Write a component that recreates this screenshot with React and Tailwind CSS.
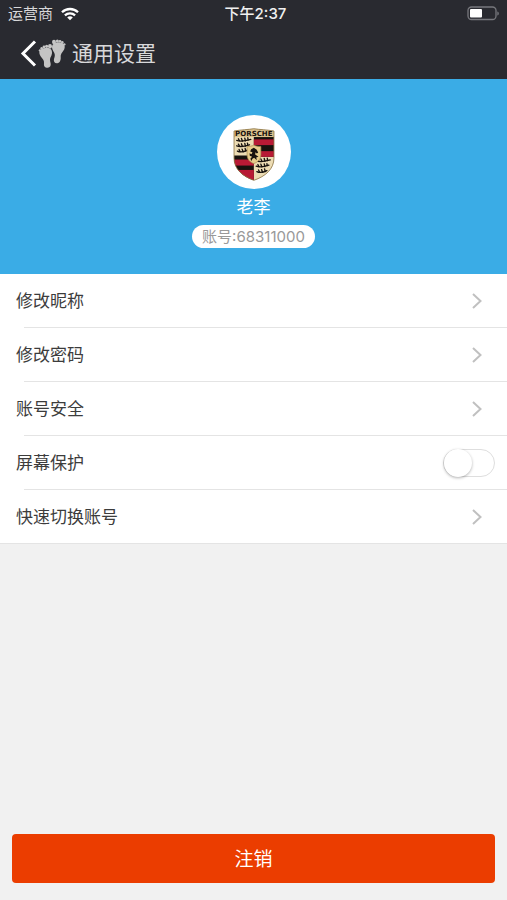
import { useState } from "react";

const MENU_ITEMS = [
  { id: "nickname", label: "修改昵称" },
  { id: "password", label: "修改密码" },
  { id: "security", label: "账号安全" },
  { id: "screen", label: "屏幕保护", toggle: true },
  { id: "switch", label: "快速切换账号" },
];

function WifiIcon() {
  return (
    <svg className="w-[18px] h-[14px]" viewBox="0 0 18 14" fill="none" stroke="white" strokeWidth="2.3">
      <path d="M1 5.2C5.4 0.9 12.6 0.9 17 5.2" />
      <path d="M3.9 8.3C6.8 5.6 11.2 5.6 14.1 8.3" />
      <path d="M9 13.2L6.2 10.4C7.8 9 10.2 9 11.8 10.4Z" fill="white" stroke="none" />
    </svg>
  );
}

function BatteryIcon() {
  return (
    <svg className="w-8 h-4" viewBox="0 0 32 16" fill="none">
      <rect x="1" y="1" width="28" height="12.5" rx="3.5" stroke="#77787d" strokeWidth="1.3" />
      <rect x="3" y="3" width="12" height="8.5" rx="1" fill="white" />
      <path d="M30.3 5.500v4c1-.3 1.5-1 1.5-2s-.5-1.7-1.500-2z" fill="#77787d" />
    </svg>
  );
}

function FootprintsIcon() {
  return (
    <svg className="w-[28px] h-[30px]" viewBox="0 0 84 90" fill="#c4c4c4">
      <path d="M4 40C4 31 14 27 26 27C38 26 43 33 42 43C41 52 36 55 36 62C36 68 39 72 38 78C37 84 32 87 26 86C19 86 17 80 18 73C19 65 15 61 10 55C6 50 4 46 4 40Z" />
      <circle cx="6" cy="34" r="3.5" />
      <circle cx="11" cy="28" r="3.8" />
      <circle cx="18" cy="24" r="4.2" />
      <circle cx="26" cy="22" r="4.8" />
      <ellipse cx="36" cy="22" rx="6" ry="7" />
      <path d="M44 17C49 9 61 8 71 11C82 15 82 26 77 34C72 42 67 46 68 54C69 62 66 72 58 73C50 74 46 67 48 60C50 54 52 49 49 42C45 34 39 26 44 17Z" />
      <ellipse cx="48" cy="9" rx="6" ry="7" />
      <circle cx="58" cy="6" r="4.6" />
      <circle cx="66" cy="7" r="4.2" />
      <circle cx="73" cy="10" r="3.8" />
      <circle cx="79" cy="16" r="3.5" />
    </svg>
  );
}

function Antlers() {
  return (
    <g fill="none" stroke="#17120e" strokeWidth="4" strokeLinecap="round">
      <path d="M0 9C12 14 28 10 42 6" />
      <path d="M8 10L5 4M17 11L14 3M26 10L24 2M34 8L33 1" />
      <path d="M0 25C12 30 26 26 38 22" />
      <path d="M8 26L5 20M17 27L14 19M26 26L24 18M33 23L32 17" />
      <path d="M2 41C12 46 22 43 32 38" />
      <path d="M10 42L7 36M19 43L16 35M27 41L25 33" />
    </g>
  );
}

function CrestLogo() {
  return (
    <svg className="w-[42px] h-[53px]" viewBox="0 0 123 158">
      <defs>
        <clipPath id="shield">
          <path d="M2 9C24 5 45 5 61 2C78 5 99 5 121 9V90C121 122 96 144 61 156C27 144 2 122 2 90Z" />
        </clipPath>
      </defs>
      <g clipPath="url(#shield)">
        <rect width="123" height="158" fill="#ecdcb4" />
        <rect x="61" y="25" width="62" height="61" fill="#17120e" />
        <rect x="61" y="34" width="62" height="17" fill="#b81a35" />
        <rect x="61" y="69" width="62" height="17" fill="#b81a35" />
        <rect x="0" y="82" width="61" height="78" fill="#17120e" />
        <rect x="0" y="94" width="61" height="18" fill="#b81a35" />
        <rect x="0" y="125" width="61" height="33" fill="#b81a35" />
        <g transform="translate(10 28)">
          <Antlers />
        </g>
        <g transform="translate(68 89)">
          <Antlers />
        </g>
        <rect width="123" height="27" fill="#dcc38d" />
      </g>
      <path d="M41 55C49 55 55 54 61 51C67 54 73 55 82 55V79C82 93 74 101 61 106C48 101 41 93 41 79Z" fill="#e6cc8c" stroke="#a88a4c" strokeWidth="2" />
      <path d="M53 63L61 59L69 64L74 73L70 76L66 72L65 79L75 86L68 88L70 96L62 89L57 92L53 99L51 91L56 86L49 83L48 75L54 78L57 72L50 70Z" fill="#17120e" />
      <path d="M2 9C24 5 45 5 61 2C78 5 99 5 121 9V90C121 122 96 144 61 156C27 144 2 122 2 90Z" fill="none" stroke="#8d7544" strokeWidth="2.5" />
      <text x="61" y="25" textAnchor="middle" fontSize="21" fontWeight="bold" fontFamily="DejaVu Sans, sans-serif" fill="#17120e">
        PORSCHE
      </text>
    </svg>
  );
}

function ArrowIcon() {
  return (
    <svg className="w-3 h-4 mr-3" viewBox="0 0 12 16" fill="none" stroke="#c0c0c0" strokeWidth="2">
      <path d="M2 1L9.500 8L2 15" />
    </svg>
  );
}

function Header() {
  return (
    <header className="bg-[#292a30] text-[#d8d8da]">
      <div className="grid grid-cols-3 items-center h-7 px-2 text-[15px]">
        <div className="flex items-center gap-2">
          <span>运营商</span>
          <WifiIcon />
        </div>
        <span className="pl-1 text-center font-medium text-[#f0f0f0]">下午2:37</span>
        <div className="flex justify-end">
          <BatteryIcon />
        </div>
      </div>
      <div className="flex items-center h-[51px] pl-5">
        <button type="button" aria-label="返回" className="cursor-pointer">
          <svg className="w-[18px] h-7" viewBox="0 0 18 28" fill="none" stroke="white" strokeWidth="3">
            <path d="M15 1.500L3 13.500L15 25.500" />
          </svg>
        </button>
        <FootprintsIcon />
        <h1 className="ml-1.5 text-[21px] leading-7">通用设置</h1>
      </div>
    </header>
  );
}

function Profile() {
  return (
    <section className="flex flex-col items-center bg-[#3aace6] pt-9 pb-[26px]">
      <div className="flex items-center justify-center size-[74px] pt-1 rounded-full bg-white">
        <CrestLogo />
      </div>
      <p className="mt-1 text-[17px] leading-7 text-white">老李</p>
      <p className="mt-1 px-2.5 rounded-full bg-white text-[15px] leading-[23px] text-[#999]">
        账号:68311000
      </p>
    </section>
  );
}

function App() {
  const [screenGuard, setScreenGuard] = useState(false);

  return (
    <div className="flex flex-col min-h-screen bg-[#f1f1f1] font-['Inter','Noto_Sans_CJK_SC',sans-serif]">
      <Header />
      <Profile />
      <ul className="bg-white text-[17px] text-[#3c3c3c]">
        {MENU_ITEMS.map((item) => (
          <li
            key={item.id}
            className="relative h-[54px] after:absolute after:bottom-0 after:left-6 last:after:left-0 after:right-0 after:h-px after:bg-[#e4e4e4]"
          >
            {item.toggle ? (
              <label className="flex items-center justify-between h-full pl-4 pr-3 cursor-pointer">
                <span className="pt-0.5">{item.label}</span>
                <input
                  type="checkbox"
                  checked={screenGuard}
                  onChange={(e) => setScreenGuard(e.target.checked)}
                  className="appearance-none flex items-center w-[52px] h-7 rounded-full border border-[#dedede] bg-white checked:bg-green-500 before:size-7 before:rounded-full before:bg-white before:shadow-[0_1px_3px_rgba(0,0,0,0.3)] checked:before:translate-x-6 cursor-pointer"
                />
              </label>
            ) : (
              <button
                type="button"
                className="flex items-center justify-between w-full h-full pl-4 pr-3 cursor-pointer"
              >
                <span className="pt-0.5">{item.label}</span>
                <ArrowIcon />
              </button>
            )}
          </li>
        ))}
      </ul>
      <div className="mt-auto px-3 pb-[17px]">
        <button
          type="button"
          className="w-full h-[49px] pt-1 rounded-sm bg-[#eb3d00] text-[19px] text-white cursor-pointer"
        >
          注销
        </button>
      </div>
    </div>
  );
}

export default App;
